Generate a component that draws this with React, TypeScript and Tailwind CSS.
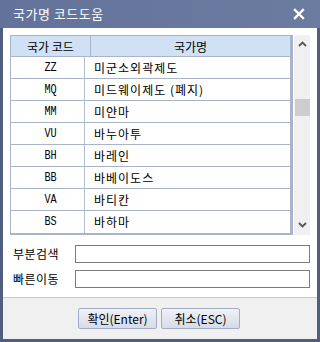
import { useState } from 'react';

const ROWS: [string, string][] = [
  ['ZZ', '미군소외곽제도'],
  ['MQ', '미드웨이제도 (폐지)'],
  ['MM', '미얀마'],
  ['VU', '바누아투'],
  ['BH', '바레인'],
  ['BB', '바베이도스'],
  ['VA', '바티칸'],
  ['BS', '바하마'],
];

const FONT = { fontFamily: '"Noto Sans CJK KR", "Noto Sans", sans-serif' };

function CloseIcon() {
  return (
    <svg viewBox="0 0 12 12" width="12" height="12" aria-hidden="true">
      <path d="M2 2 10 10M10 2 2 10" stroke="#fff" strokeWidth="2.4" strokeLinecap="square" />
    </svg>
  );
}

function Chevron({ up }: { up?: boolean }) {
  return (
    <svg viewBox="0 0 9 6" width="9" height="6" aria-hidden="true">
      <path d={up ? 'M1 5 4.5 1.5 8 5' : 'M1 1 4.5 4.5 8 1'} stroke="#555" strokeWidth="1.8" fill="none" />
    </svg>
  );
}

export default function App() {
  const [selected, setSelected] = useState<string | null>(null);

  return (
    <div
      className="w-[320px] h-[342px] bg-[#4f5e7d] flex flex-col pl-[3px] pr-[3px] pb-[3px] text-[12px] text-black"
      style={FONT}
    >
      {/* Title bar */}
      <div className="h-[28px] -ml-[3px] -mr-[3px] pl-[13px] pr-[15px] bg-gradient-to-r from-[#62729a] to-[#6c7ca0] flex items-center justify-between shrink-0">
        <span className="text-white text-[13px] tracking-[0.5px]">국가명 코드도움</span>
        <CloseIcon />
      </div>

      {/* Body */}
      <div className="bg-white flex-1 flex flex-col pt-[7px] pl-[7px] pr-[7px]">
        <div className="flex h-[200px]">
          <div className="w-[283px] border border-[#a9b4c8] border-b-[3px] border-r-[3px] border-r-[#a9b4c8] flex flex-col">
            <div className="h-[21px] bg-[#d0e0f5] border-b border-[#a9b4c8] flex shrink-0">
              <div className="w-[80px] border-r border-[#a9b4c8] flex items-center justify-center pt-[1px]">국가 코드</div>
              <div className="flex-1 flex items-center justify-center pt-[1px]">국가명</div>
            </div>
            {ROWS.map(([code, name]) => (
              <button
                key={code}
                onClick={() => setSelected(code)}
                className={`h-[22px] flex text-left border-b border-[#a9b4c8] last:border-b-0 shrink-0 ${
                  selected === code ? 'bg-[#dce8f8]' : 'bg-white'
                }`}
              >
                <span className="w-[80px] border-r border-[#a9b4c8] h-full flex items-center justify-center font-['Liberation_Mono',monospace] text-[12px] scale-x-[0.85]">
                  {code}
                </span>
                <span className="flex-1 h-full flex items-center pl-[3px] tracking-[1px]">{name}</span>
              </button>
            ))}
          </div>
          <div className="w-[16px] ml-[1px] bg-[#f0f0f0] flex flex-col items-center">
            <div className="h-[16px] flex items-center justify-center pt-[2px]">
              <Chevron up />
            </div>
            <div className="h-[48px]" />
            <div className="w-[15px] h-[17px] bg-[#cdcdcd]" />
            <div className="flex-1" />
            <div className="h-[16px] flex items-center justify-center pb-[4px]">
              <Chevron />
            </div>
          </div>
        </div>

        <div className="flex items-center mt-[10px] h-[18px]">
          <span className="w-[65px] pl-[3px] tracking-[0.5px]">부분검색</span>
          <input className="w-[235px] h-[18px] border border-[#7a7a7a] outline-none px-1" />
        </div>
        <div className="flex items-center mt-[7px] h-[18px]">
          <span className="w-[65px] pl-[3px] tracking-[0.5px]">빠른이동</span>
          <input className="w-[235px] h-[18px] border border-[#7a7a7a] outline-none px-1" />
        </div>
        <div className="flex-1" />
      </div>

      {/* Footer */}
      <div className="h-[42px] bg-[#f0f0f0] border-t border-[#c8c8c8] flex justify-center items-start pt-[10px] gap-[4px] pr-[2px]">
        <button className="w-[79px] h-[21px] rounded-[2px] border border-[#a3aec6] bg-gradient-to-b from-[#eef1f6] to-[#d6dce8] text-[12px]">
          확인(Enter)
        </button>
        <button className="w-[79px] h-[21px] rounded-[2px] border border-[#a3aec6] bg-gradient-to-b from-[#eef1f6] to-[#d6dce8] text-[12px]">
          취소(ESC)
        </button>
      </div>
    </div>
  );
}
